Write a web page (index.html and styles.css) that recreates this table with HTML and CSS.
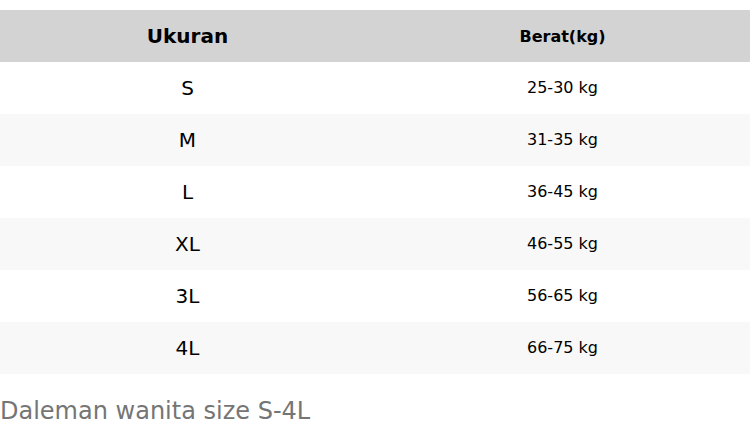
FILE: index.html
```html
<!DOCTYPE html>
<html>
<head>
<meta charset="utf-8">
<link rel="stylesheet" href="styles.css">
</head>
<body>
<table class="size-table">
  <thead>
    <tr><th class="col-size">Ukuran</th><th class="col-weight">Berat(kg)</th></tr>
  </thead>
  <tbody>
    <tr><td class="col-size">S</td><td class="col-weight">25-30 kg</td></tr>
    <tr><td class="col-size">M</td><td class="col-weight">31-35 kg</td></tr>
    <tr><td class="col-size">L</td><td class="col-weight">36-45 kg</td></tr>
    <tr><td class="col-size">XL</td><td class="col-weight">46-55 kg</td></tr>
    <tr><td class="col-size">3L</td><td class="col-weight">56-65 kg</td></tr>
    <tr><td class="col-size">4L</td><td class="col-weight">66-75 kg</td></tr>
  </tbody>
</table>
<p class="caption">Daleman wanita size S-4L</p>
</body>
</html>
```
FILE: styles.css
```css
html, body {
  margin: 0;
  padding: 0;
  background: #ffffff;
}
body {
  padding-top: 10px;
  font-family: "DejaVu Sans", sans-serif;
  color: #000;
}
.size-table {
  width: 750px;
  border-collapse: collapse;
  border-spacing: 0;
  table-layout: fixed;
}
.size-table th,
.size-table td {
  height: 52px;
  padding: 0;
  text-align: center;
  vertical-align: middle;
  width: 50%;
}
.size-table td.col-weight {
  height: 50px;
  padding-bottom: 2px;
}
.size-table thead tr {
  background: #d3d3d3;
}
.size-table th.col-size {
  font-size: 20px;
  font-weight: bold;
}
.size-table th.col-weight {
  font-size: 16px;
  font-weight: bold;
}
.size-table td.col-size {
  font-size: 20px;
}
.size-table td.col-weight {
  font-size: 16px;
}
.size-table tbody tr:nth-child(even) {
  background: #f8f8f8;
}
.caption {
  margin: 23px 0 0 0;
  font-size: 24px;
  line-height: 28px;
  color: #757575;
}
```
